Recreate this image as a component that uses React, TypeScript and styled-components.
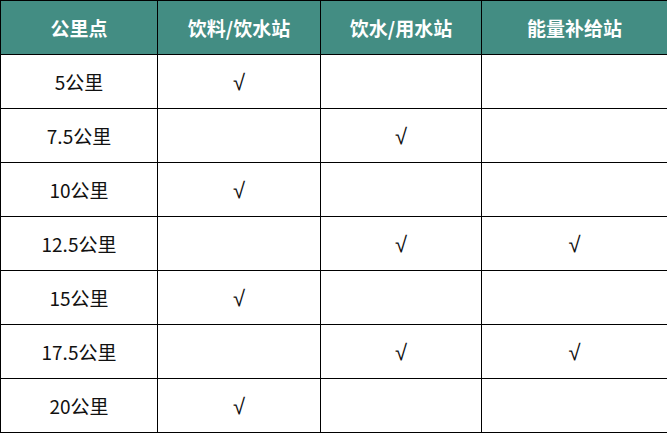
import styled, { createGlobalStyle } from "styled-components";

const GlobalStyle = createGlobalStyle`
  html, body {
    margin: 0;
    padding: 0;
    background: #ffffff;
  }
  body {
    font-family: "Noto Sans CJK SC", "Noto Sans", sans-serif;
  }
`;

const StyledTable = styled.table`
  width: 667px;
  border-collapse: collapse;
  table-layout: fixed;
`;

const StyledHeadCell = styled.th`
  height: 53px;
  padding: 0;
  background: #438d83;
  color: #ffffff;
  font-size: 19px;
  font-weight: 700;
  text-align: center;
  vertical-align: middle;
  border: 1px solid #000000;
`;

const StyledCell = styled.td`
  height: 53px;
  padding: 0;
  color: #111111;
  font-size: 19px;
  font-weight: 400;
  text-align: center;
  vertical-align: middle;
  border: 1px solid #000000;
`;

const StyledCheck = styled.span`
  font-family: "Liberation Sans", "DejaVu Sans", sans-serif;
  font-size: 22px;
  color: #111111;
`;

const columns = [
  { title: "公里点", width: 157 },
  { title: "饮料/饮水站", width: 163 },
  { title: "饮水/用水站", width: 161 },
  { title: "能量补给站", width: 186 },
];

const rows = [
  { km: "5公里", drink: true, water: false, energy: false },
  { km: "7.5公里", drink: false, water: true, energy: false },
  { km: "10公里", drink: true, water: false, energy: false },
  { km: "12.5公里", drink: false, water: true, energy: true },
  { km: "15公里", drink: true, water: false, energy: false },
  { km: "17.5公里", drink: false, water: true, energy: true },
  { km: "20公里", drink: true, water: false, energy: false },
];

function Check({ on }: { on: boolean }) {
  return on ? <StyledCheck>√</StyledCheck> : null;
}

function App() {
  return (
    <>
      <GlobalStyle />
      <StyledTable>
        <colgroup>
          {columns.map((c) => (
            <col key={c.title} style={{ width: c.width }} />
          ))}
        </colgroup>
        <thead>
          <tr>
            {columns.map((c) => (
              <StyledHeadCell key={c.title}>{c.title}</StyledHeadCell>
            ))}
          </tr>
        </thead>
        <tbody>
          {rows.map((r) => (
            <tr key={r.km}>
              <StyledCell>{r.km}</StyledCell>
              <StyledCell>
                <Check on={r.drink} />
              </StyledCell>
              <StyledCell>
                <Check on={r.water} />
              </StyledCell>
              <StyledCell>
                <Check on={r.energy} />
              </StyledCell>
            </tr>
          ))}
        </tbody>
      </StyledTable>
    </>
  );
}

export default App;
